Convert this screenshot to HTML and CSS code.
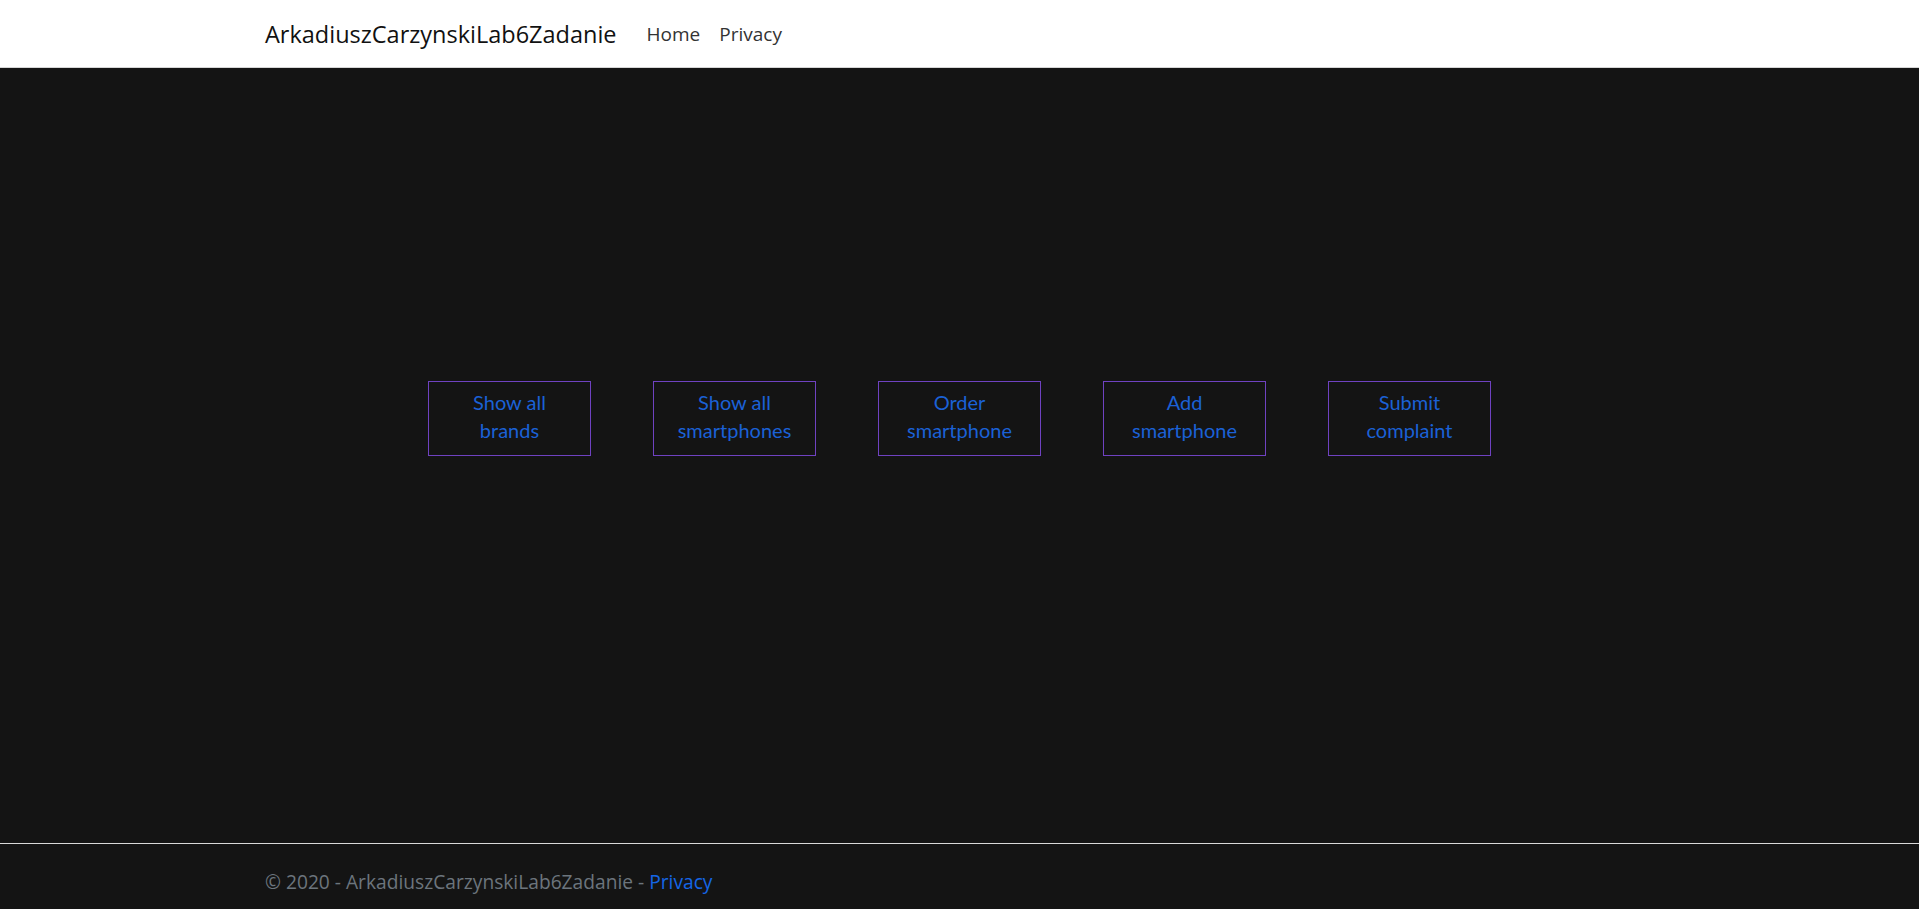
FILE: index.html
```html
<!DOCTYPE html>
<html lang="en">
<head>
<meta charset="utf-8">
<title>ArkadiuszCarzynskiLab6Zadanie</title>
<link rel="stylesheet" href="styles.css">
</head>
<body>
<header class="navbar">
  <div class="container nav-inner">
    <a class="brand" href="#">ArkadiuszCarzynskiLab6Zadanie</a>
    <nav class="nav-links">
      <a class="nav-link" href="#">Home</a>
      <a class="nav-link" href="#">Privacy</a>
    </nav>
  </div>
</header>
<main class="main">
  <div class="actions">
    <a class="action" href="#">Show all<br>brands</a>
    <a class="action" href="#">Show all<br>smartphones</a>
    <a class="action" href="#">Order<br>smartphone</a>
    <a class="action" href="#">Add<br>smartphone</a>
    <a class="action" href="#">Submit<br>complaint</a>
  </div>
</main>
<footer class="footer">
  <div class="container footer-inner">
    &copy; 2020 - ArkadiuszCarzynskiLab6Zadanie - <a class="footer-link" href="#">Privacy</a>
  </div>
</footer>
</body>
</html>
```
FILE: styles.css
```css
html, body {
  margin: 0;
  padding: 0;
}
body {
  min-height: 100vh;
  display: flex;
  flex-direction: column;
  background: #141414;
  font-family: "Open Sans", "Noto Sans", "Liberation Sans", sans-serif;
  font-size: 19px;
  overflow: hidden;
}
a { text-decoration: none; }
.container {
  margin: 0 auto;
  padding: 0 265px;
  width: 100%;
  box-sizing: border-box;
}
.navbar {
  background: #fff;
  height: 67px;
  border-bottom: 1px solid #d6d6d6;
  box-sizing: content-box;
}
.nav-inner {
  height: 100%;
  display: flex;
  align-items: center;
}
.brand {
  color: #111;
  font-size: 23.5px;
  margin-right: 30px;
}
.nav-links {
  display: flex;
  gap: 19px;
}
.nav-link {
  color: #333;
  font-size: 19px;
}
.main {
  flex: 1;
  padding-top: 313px;
}
.actions {
  display: flex;
  justify-content: center;
  gap: 62px;
}
.action {
  width: 163px;
  height: 75px;
  box-sizing: border-box;
  border: 1px solid #6f42c1;
  padding-bottom: 6px;
  display: flex;
  align-items: center;
  justify-content: center;
  text-align: center;
  color: #1b61d6;
  font-family: "Lato", "Open Sans", sans-serif;
  font-size: 20px;
  line-height: 28px;
}
.footer {
  border-top: 1px solid #d9d9d9;
  height: 66px;
  box-sizing: border-box;
}
.footer-inner {
  padding-top: 10px;
  line-height: 55px;
  color: #6c757d;
  font-size: 19.2px;
}
.footer-link {
  color: #1466e6;
}
```
